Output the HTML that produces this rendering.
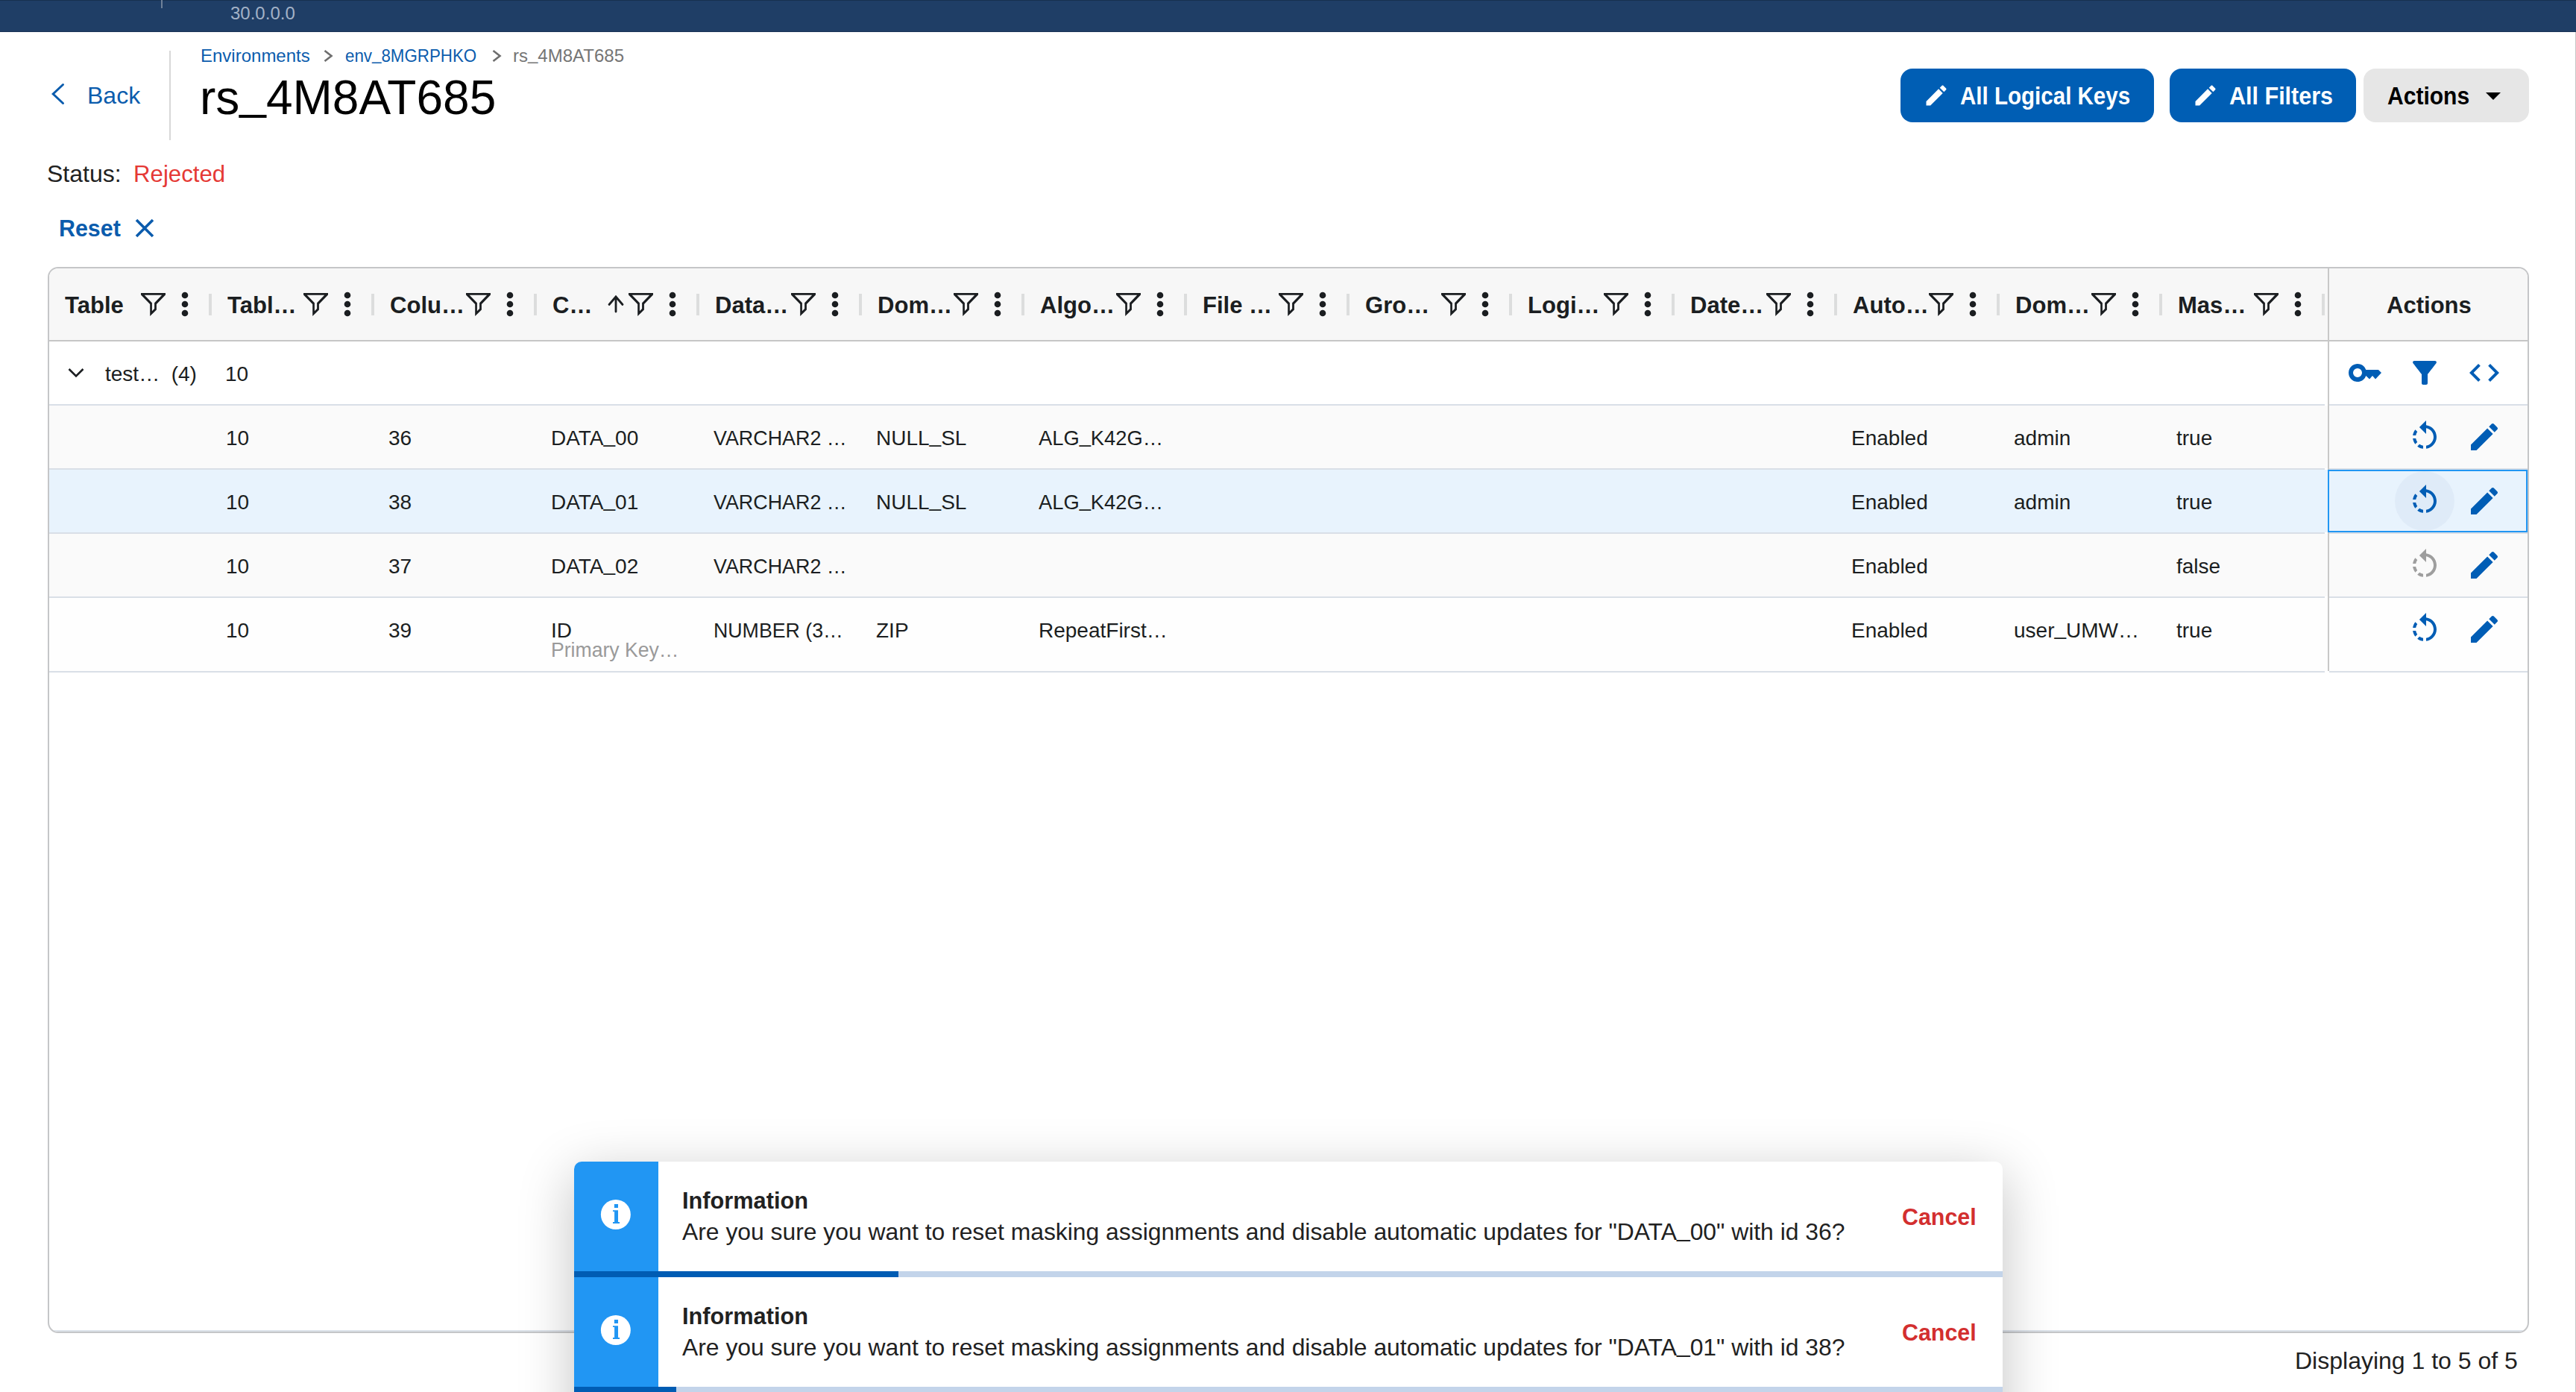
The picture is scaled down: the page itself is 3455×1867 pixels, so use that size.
<!DOCTYPE html>
<html><head><meta charset="utf-8"><style>
html,body{margin:0;padding:0;}
body{width:3455px;height:1867px;overflow:hidden;position:relative;background:#fff;font-family:"Liberation Sans", sans-serif;}
</style></head><body>
<div style="position:absolute;left:0px;top:0px;width:3455px;height:43px;background:#1f3e66;"></div>
<div style="position:absolute;left:0px;top:0px;width:3455px;height:1px;background:#17304f;"></div>
<div style="position:absolute;left:0px;top:42px;width:3455px;height:1px;background:#1a3457;"></div>
<div style="position:absolute;left:216px;top:0px;width:2px;height:11px;background:#6f8199;"></div>
<div style="position:absolute;left:309.00px;top:5.88px;font-size:24px;line-height:24px;color:#a3b2c6;font-weight:normal;white-space:nowrap;">30.0.0.0</div>
<div style="position:absolute;left:3454px;top:43px;width:1px;height:1824px;background:#c6c6c6;"></div>
<svg style="position:absolute;left:60px;top:100px" width="40" height="50" viewBox="0 0 40 50"><polyline points="24.5,13.5 11.2,26 24.5,38.5" fill="none" stroke="#0b5cad" stroke-width="3" stroke-linecap="round" stroke-linejoin="miter"/></svg>
<div style="position:absolute;left:117.00px;top:111.91px;font-size:32px;line-height:32px;color:#0b5cad;font-weight:normal;white-space:nowrap;">Back</div>
<div style="position:absolute;left:227px;top:68px;width:2px;height:120px;background:#d8d8d8;"></div>
<div style="position:absolute;left:269.00px;top:62.68px;font-size:24px;line-height:24px;color:#0b5cad;font-weight:normal;white-space:nowrap;">Environments</div>
<svg style="position:absolute;left:430px;top:62px" width="20" height="26" viewBox="0 0 20 26"><polyline points="5.5,6 14.5,13 5.5,20" fill="none" stroke="#6e6e6e" stroke-width="2.6"/></svg>
<div style="position:absolute;left:463.00px;top:62.68px;font-size:24px;line-height:24px;color:#0b5cad;font-weight:normal;white-space:nowrap;transform:scaleX(0.93);transform-origin:0 0;">env<span style="position:relative;top:-0.12em">_</span>8MGRPHKO</div>
<svg style="position:absolute;left:656px;top:62px" width="20" height="26" viewBox="0 0 20 26"><polyline points="5.5,6 14.5,13 5.5,20" fill="none" stroke="#6e6e6e" stroke-width="2.6"/></svg>
<div style="position:absolute;left:688.00px;top:62.68px;font-size:24px;line-height:24px;color:#757575;font-weight:normal;white-space:nowrap;">rs<span style="position:relative;top:-0.12em">_</span>4M8AT685</div>
<div style="position:absolute;left:268.00px;top:98.82px;font-size:64px;line-height:64px;color:#000;font-weight:normal;white-space:nowrap;">rs<span style="position:relative;top:-0.12em">_</span>4M8AT685</div>
<div style="position:absolute;left:63.00px;top:216.91px;font-size:32px;line-height:32px;color:#212121;font-weight:normal;white-space:nowrap;">Status:</div>
<div style="position:absolute;left:179.00px;top:216.91px;font-size:32px;line-height:32px;color:#e53935;font-weight:normal;white-space:nowrap;transform:scaleX(0.975);transform-origin:0 0;">Rejected</div>
<div style="position:absolute;left:79.00px;top:289.91px;font-size:32px;line-height:32px;color:#0b5cad;font-weight:bold;white-space:nowrap;transform:scaleX(0.95);transform-origin:0 0;">Reset</div>
<svg style="position:absolute;left:178px;top:290px" width="32" height="32" viewBox="0 0 32 32"><path d="M5 5L27 27M27 5L5 27" stroke="#0b5cad" stroke-width="3.6" fill="none"/></svg>
<div style="position:absolute;left:2549px;top:92px;width:340px;height:72px;background:#005eb4;border-radius:16px;"></div>
<svg style="position:absolute;left:2579px;top:110px" width="36" height="36" viewBox="0 0 24 24"><path d="M3 17.25V21h3.75L17.81 9.94l-3.75-3.75L3 17.25zM20.71 7.04c.39-.39.39-1.02 0-1.41l-2.34-2.34c-.39-.39-1.02-.39-1.41 0l-1.83 1.83 3.75 3.75 1.83-1.83z" fill="#fff"/></svg>
<div style="position:absolute;left:2628.50px;top:111.57px;font-size:33px;line-height:33px;color:#fff;font-weight:bold;white-space:nowrap;transform:scaleX(0.895);transform-origin:0 0;">All Logical Keys</div>
<div style="position:absolute;left:2910px;top:92px;width:250px;height:72px;background:#005eb4;border-radius:16px;"></div>
<svg style="position:absolute;left:2940px;top:110px" width="36" height="36" viewBox="0 0 24 24"><path d="M3 17.25V21h3.75L17.81 9.94l-3.75-3.75L3 17.25zM20.71 7.04c.39-.39.39-1.02 0-1.41l-2.34-2.34c-.39-.39-1.02-.39-1.41 0l-1.83 1.83 3.75 3.75 1.83-1.83z" fill="#fff"/></svg>
<div style="position:absolute;left:2990.00px;top:111.57px;font-size:33px;line-height:33px;color:#fff;font-weight:bold;white-space:nowrap;transform:scaleX(0.925);transform-origin:0 0;">All Filters</div>
<div style="position:absolute;left:3170px;top:92px;width:222px;height:72px;background:#e6e6e6;border-radius:16px;"></div>
<div style="position:absolute;left:3202.00px;top:111.57px;font-size:33px;line-height:33px;color:#000;font-weight:bold;white-space:nowrap;transform:scaleX(0.91);transform-origin:0 0;">Actions</div>
<svg style="position:absolute;left:3330px;top:120px" width="28" height="18" viewBox="0 0 28 18"><path d="M4 4H24L14 14Z" fill="#000"/></svg>
<div style="position:absolute;left:64px;top:358px;width:3324px;height:1426px;border:2px solid #c5c6c8;border-radius:14px;overflow:hidden;background:#fff;">
<div style="position:absolute;left:0px;top:0px;width:3324px;height:96px;background:#f7f7f7;"></div>
<div style="position:absolute;left:0px;top:96px;width:3324px;height:2px;background:#c6c6c6;"></div>
<div style="position:absolute;left:21.00px;top:33.41px;font-size:32px;line-height:32px;color:#1b1e21;font-weight:bold;white-space:nowrap;transform:scaleX(0.97);transform-origin:0 0;">Table</div>
<svg style="position:absolute;left:123px;top:33px" width="33" height="31" viewBox="0 0 33 31"><path fill-rule="evenodd" fill="#1b1e21" d="M0 0H33V2.6L20.9 14.9V22.4L12.2 31V14.9L0 2.6Z M4.7 2.8H28.2L18.1 13.2V20.9L14.9 24.3V13.2Z"/></svg>
<svg style="position:absolute;left:177px;top:30px" width="10" height="36" viewBox="0 0 10 36"><circle cx="5" cy="6" r="4.3" fill="#1b1e21"/><circle cx="5" cy="18" r="4.3" fill="#1b1e21"/><circle cx="5" cy="30" r="4.3" fill="#1b1e21"/></svg>
<div style="position:absolute;left:214px;top:34px;width:4px;height:29px;background:#dcdddd;"></div>
<div style="position:absolute;left:239.00px;top:33.41px;font-size:32px;line-height:32px;color:#1b1e21;font-weight:bold;white-space:nowrap;transform:scaleX(0.97);transform-origin:0 0;">Tabl…</div>
<svg style="position:absolute;left:341px;top:33px" width="33" height="31" viewBox="0 0 33 31"><path fill-rule="evenodd" fill="#1b1e21" d="M0 0H33V2.6L20.9 14.9V22.4L12.2 31V14.9L0 2.6Z M4.7 2.8H28.2L18.1 13.2V20.9L14.9 24.3V13.2Z"/></svg>
<svg style="position:absolute;left:395px;top:30px" width="10" height="36" viewBox="0 0 10 36"><circle cx="5" cy="6" r="4.3" fill="#1b1e21"/><circle cx="5" cy="18" r="4.3" fill="#1b1e21"/><circle cx="5" cy="30" r="4.3" fill="#1b1e21"/></svg>
<div style="position:absolute;left:432px;top:34px;width:4px;height:29px;background:#dcdddd;"></div>
<div style="position:absolute;left:457.00px;top:33.41px;font-size:32px;line-height:32px;color:#1b1e21;font-weight:bold;white-space:nowrap;transform:scaleX(0.97);transform-origin:0 0;">Colu…</div>
<svg style="position:absolute;left:559px;top:33px" width="33" height="31" viewBox="0 0 33 31"><path fill-rule="evenodd" fill="#1b1e21" d="M0 0H33V2.6L20.9 14.9V22.4L12.2 31V14.9L0 2.6Z M4.7 2.8H28.2L18.1 13.2V20.9L14.9 24.3V13.2Z"/></svg>
<svg style="position:absolute;left:613px;top:30px" width="10" height="36" viewBox="0 0 10 36"><circle cx="5" cy="6" r="4.3" fill="#1b1e21"/><circle cx="5" cy="18" r="4.3" fill="#1b1e21"/><circle cx="5" cy="30" r="4.3" fill="#1b1e21"/></svg>
<div style="position:absolute;left:650px;top:34px;width:4px;height:29px;background:#dcdddd;"></div>
<div style="position:absolute;left:675.00px;top:33.41px;font-size:32px;line-height:32px;color:#1b1e21;font-weight:bold;white-space:nowrap;transform:scaleX(0.97);transform-origin:0 0;">C…</div>
<svg style="position:absolute;left:777px;top:33px" width="33" height="31" viewBox="0 0 33 31"><path fill-rule="evenodd" fill="#1b1e21" d="M0 0H33V2.6L20.9 14.9V22.4L12.2 31V14.9L0 2.6Z M4.7 2.8H28.2L18.1 13.2V20.9L14.9 24.3V13.2Z"/></svg>
<svg style="position:absolute;left:831px;top:30px" width="10" height="36" viewBox="0 0 10 36"><circle cx="5" cy="6" r="4.3" fill="#1b1e21"/><circle cx="5" cy="18" r="4.3" fill="#1b1e21"/><circle cx="5" cy="30" r="4.3" fill="#1b1e21"/></svg>
<div style="position:absolute;left:868px;top:34px;width:4px;height:29px;background:#dcdddd;"></div>
<div style="position:absolute;left:893.00px;top:33.41px;font-size:32px;line-height:32px;color:#1b1e21;font-weight:bold;white-space:nowrap;transform:scaleX(0.97);transform-origin:0 0;">Data…</div>
<svg style="position:absolute;left:995px;top:33px" width="33" height="31" viewBox="0 0 33 31"><path fill-rule="evenodd" fill="#1b1e21" d="M0 0H33V2.6L20.9 14.9V22.4L12.2 31V14.9L0 2.6Z M4.7 2.8H28.2L18.1 13.2V20.9L14.9 24.3V13.2Z"/></svg>
<svg style="position:absolute;left:1049px;top:30px" width="10" height="36" viewBox="0 0 10 36"><circle cx="5" cy="6" r="4.3" fill="#1b1e21"/><circle cx="5" cy="18" r="4.3" fill="#1b1e21"/><circle cx="5" cy="30" r="4.3" fill="#1b1e21"/></svg>
<div style="position:absolute;left:1086px;top:34px;width:4px;height:29px;background:#dcdddd;"></div>
<div style="position:absolute;left:1111.00px;top:33.41px;font-size:32px;line-height:32px;color:#1b1e21;font-weight:bold;white-space:nowrap;transform:scaleX(0.97);transform-origin:0 0;">Dom…</div>
<svg style="position:absolute;left:1213px;top:33px" width="33" height="31" viewBox="0 0 33 31"><path fill-rule="evenodd" fill="#1b1e21" d="M0 0H33V2.6L20.9 14.9V22.4L12.2 31V14.9L0 2.6Z M4.7 2.8H28.2L18.1 13.2V20.9L14.9 24.3V13.2Z"/></svg>
<svg style="position:absolute;left:1267px;top:30px" width="10" height="36" viewBox="0 0 10 36"><circle cx="5" cy="6" r="4.3" fill="#1b1e21"/><circle cx="5" cy="18" r="4.3" fill="#1b1e21"/><circle cx="5" cy="30" r="4.3" fill="#1b1e21"/></svg>
<div style="position:absolute;left:1304px;top:34px;width:4px;height:29px;background:#dcdddd;"></div>
<div style="position:absolute;left:1329.00px;top:33.41px;font-size:32px;line-height:32px;color:#1b1e21;font-weight:bold;white-space:nowrap;transform:scaleX(0.97);transform-origin:0 0;">Algo…</div>
<svg style="position:absolute;left:1431px;top:33px" width="33" height="31" viewBox="0 0 33 31"><path fill-rule="evenodd" fill="#1b1e21" d="M0 0H33V2.6L20.9 14.9V22.4L12.2 31V14.9L0 2.6Z M4.7 2.8H28.2L18.1 13.2V20.9L14.9 24.3V13.2Z"/></svg>
<svg style="position:absolute;left:1485px;top:30px" width="10" height="36" viewBox="0 0 10 36"><circle cx="5" cy="6" r="4.3" fill="#1b1e21"/><circle cx="5" cy="18" r="4.3" fill="#1b1e21"/><circle cx="5" cy="30" r="4.3" fill="#1b1e21"/></svg>
<div style="position:absolute;left:1522px;top:34px;width:4px;height:29px;background:#dcdddd;"></div>
<div style="position:absolute;left:1547.00px;top:33.41px;font-size:32px;line-height:32px;color:#1b1e21;font-weight:bold;white-space:nowrap;transform:scaleX(0.97);transform-origin:0 0;">File …</div>
<svg style="position:absolute;left:1649px;top:33px" width="33" height="31" viewBox="0 0 33 31"><path fill-rule="evenodd" fill="#1b1e21" d="M0 0H33V2.6L20.9 14.9V22.4L12.2 31V14.9L0 2.6Z M4.7 2.8H28.2L18.1 13.2V20.9L14.9 24.3V13.2Z"/></svg>
<svg style="position:absolute;left:1703px;top:30px" width="10" height="36" viewBox="0 0 10 36"><circle cx="5" cy="6" r="4.3" fill="#1b1e21"/><circle cx="5" cy="18" r="4.3" fill="#1b1e21"/><circle cx="5" cy="30" r="4.3" fill="#1b1e21"/></svg>
<div style="position:absolute;left:1740px;top:34px;width:4px;height:29px;background:#dcdddd;"></div>
<div style="position:absolute;left:1765.00px;top:33.41px;font-size:32px;line-height:32px;color:#1b1e21;font-weight:bold;white-space:nowrap;transform:scaleX(0.97);transform-origin:0 0;">Gro…</div>
<svg style="position:absolute;left:1867px;top:33px" width="33" height="31" viewBox="0 0 33 31"><path fill-rule="evenodd" fill="#1b1e21" d="M0 0H33V2.6L20.9 14.9V22.4L12.2 31V14.9L0 2.6Z M4.7 2.8H28.2L18.1 13.2V20.9L14.9 24.3V13.2Z"/></svg>
<svg style="position:absolute;left:1921px;top:30px" width="10" height="36" viewBox="0 0 10 36"><circle cx="5" cy="6" r="4.3" fill="#1b1e21"/><circle cx="5" cy="18" r="4.3" fill="#1b1e21"/><circle cx="5" cy="30" r="4.3" fill="#1b1e21"/></svg>
<div style="position:absolute;left:1958px;top:34px;width:4px;height:29px;background:#dcdddd;"></div>
<div style="position:absolute;left:1983.00px;top:33.41px;font-size:32px;line-height:32px;color:#1b1e21;font-weight:bold;white-space:nowrap;transform:scaleX(0.97);transform-origin:0 0;">Logi…</div>
<svg style="position:absolute;left:2085px;top:33px" width="33" height="31" viewBox="0 0 33 31"><path fill-rule="evenodd" fill="#1b1e21" d="M0 0H33V2.6L20.9 14.9V22.4L12.2 31V14.9L0 2.6Z M4.7 2.8H28.2L18.1 13.2V20.9L14.9 24.3V13.2Z"/></svg>
<svg style="position:absolute;left:2139px;top:30px" width="10" height="36" viewBox="0 0 10 36"><circle cx="5" cy="6" r="4.3" fill="#1b1e21"/><circle cx="5" cy="18" r="4.3" fill="#1b1e21"/><circle cx="5" cy="30" r="4.3" fill="#1b1e21"/></svg>
<div style="position:absolute;left:2176px;top:34px;width:4px;height:29px;background:#dcdddd;"></div>
<div style="position:absolute;left:2201.00px;top:33.41px;font-size:32px;line-height:32px;color:#1b1e21;font-weight:bold;white-space:nowrap;transform:scaleX(0.97);transform-origin:0 0;">Date…</div>
<svg style="position:absolute;left:2303px;top:33px" width="33" height="31" viewBox="0 0 33 31"><path fill-rule="evenodd" fill="#1b1e21" d="M0 0H33V2.6L20.9 14.9V22.4L12.2 31V14.9L0 2.6Z M4.7 2.8H28.2L18.1 13.2V20.9L14.9 24.3V13.2Z"/></svg>
<svg style="position:absolute;left:2357px;top:30px" width="10" height="36" viewBox="0 0 10 36"><circle cx="5" cy="6" r="4.3" fill="#1b1e21"/><circle cx="5" cy="18" r="4.3" fill="#1b1e21"/><circle cx="5" cy="30" r="4.3" fill="#1b1e21"/></svg>
<div style="position:absolute;left:2394px;top:34px;width:4px;height:29px;background:#dcdddd;"></div>
<div style="position:absolute;left:2419.00px;top:33.41px;font-size:32px;line-height:32px;color:#1b1e21;font-weight:bold;white-space:nowrap;transform:scaleX(0.97);transform-origin:0 0;">Auto…</div>
<svg style="position:absolute;left:2521px;top:33px" width="33" height="31" viewBox="0 0 33 31"><path fill-rule="evenodd" fill="#1b1e21" d="M0 0H33V2.6L20.9 14.9V22.4L12.2 31V14.9L0 2.6Z M4.7 2.8H28.2L18.1 13.2V20.9L14.9 24.3V13.2Z"/></svg>
<svg style="position:absolute;left:2575px;top:30px" width="10" height="36" viewBox="0 0 10 36"><circle cx="5" cy="6" r="4.3" fill="#1b1e21"/><circle cx="5" cy="18" r="4.3" fill="#1b1e21"/><circle cx="5" cy="30" r="4.3" fill="#1b1e21"/></svg>
<div style="position:absolute;left:2612px;top:34px;width:4px;height:29px;background:#dcdddd;"></div>
<div style="position:absolute;left:2637.00px;top:33.41px;font-size:32px;line-height:32px;color:#1b1e21;font-weight:bold;white-space:nowrap;transform:scaleX(0.97);transform-origin:0 0;">Dom…</div>
<svg style="position:absolute;left:2739px;top:33px" width="33" height="31" viewBox="0 0 33 31"><path fill-rule="evenodd" fill="#1b1e21" d="M0 0H33V2.6L20.9 14.9V22.4L12.2 31V14.9L0 2.6Z M4.7 2.8H28.2L18.1 13.2V20.9L14.9 24.3V13.2Z"/></svg>
<svg style="position:absolute;left:2793px;top:30px" width="10" height="36" viewBox="0 0 10 36"><circle cx="5" cy="6" r="4.3" fill="#1b1e21"/><circle cx="5" cy="18" r="4.3" fill="#1b1e21"/><circle cx="5" cy="30" r="4.3" fill="#1b1e21"/></svg>
<div style="position:absolute;left:2830px;top:34px;width:4px;height:29px;background:#dcdddd;"></div>
<div style="position:absolute;left:2855.00px;top:33.41px;font-size:32px;line-height:32px;color:#1b1e21;font-weight:bold;white-space:nowrap;transform:scaleX(0.97);transform-origin:0 0;">Mas…</div>
<svg style="position:absolute;left:2957px;top:33px" width="33" height="31" viewBox="0 0 33 31"><path fill-rule="evenodd" fill="#1b1e21" d="M0 0H33V2.6L20.9 14.9V22.4L12.2 31V14.9L0 2.6Z M4.7 2.8H28.2L18.1 13.2V20.9L14.9 24.3V13.2Z"/></svg>
<svg style="position:absolute;left:3011px;top:30px" width="10" height="36" viewBox="0 0 10 36"><circle cx="5" cy="6" r="4.3" fill="#1b1e21"/><circle cx="5" cy="18" r="4.3" fill="#1b1e21"/><circle cx="5" cy="30" r="4.3" fill="#1b1e21"/></svg>
<div style="position:absolute;left:3048px;top:34px;width:4px;height:29px;background:#dcdddd;"></div>
<svg style="position:absolute;left:746px;top:34px" width="28" height="28" viewBox="0 0 28 28"><path d="M14 4V24 M5 14.5L14 4L23 14.5" fill="none" stroke="#1b1e21" stroke-width="2.8" stroke-linecap="round"/></svg>
<div style="position:absolute;left:3134.50px;top:32.91px;font-size:32px;line-height:32px;color:#1b1e21;font-weight:bold;white-space:nowrap;transform:scaleX(0.97);transform-origin:0 0;">Actions</div>
<div style="position:absolute;left:3056px;top:0px;width:2px;height:540px;background:#c8c8c8;"></div>
<div style="position:absolute;left:0px;top:98px;width:3056px;height:84px;background:#ffffff;"></div>
<div style="position:absolute;left:3058px;top:98px;width:3266px;height:84px;background:#ffffff;"></div>
<div style="position:absolute;left:0px;top:182px;width:3052px;height:2px;background:#d9dfe7;"></div>
<div style="position:absolute;left:3058px;top:182px;width:3266px;height:2px;background:#d9dfe7;"></div>
<div style="position:absolute;left:0px;top:184px;width:3056px;height:84px;background:#fafafa;"></div>
<div style="position:absolute;left:3058px;top:184px;width:3266px;height:84px;background:#fafafa;"></div>
<div style="position:absolute;left:0px;top:268px;width:3052px;height:2px;background:#d9dfe7;"></div>
<div style="position:absolute;left:3058px;top:268px;width:3266px;height:2px;background:#d9dfe7;"></div>
<div style="position:absolute;left:0px;top:270px;width:3056px;height:84px;background:#e8f3fd;"></div>
<div style="position:absolute;left:3058px;top:270px;width:3266px;height:84px;background:#e8f3fd;"></div>
<div style="position:absolute;left:0px;top:354px;width:3052px;height:2px;background:#d9dfe7;"></div>
<div style="position:absolute;left:3058px;top:354px;width:3266px;height:2px;background:#d9dfe7;"></div>
<div style="position:absolute;left:0px;top:356px;width:3056px;height:84px;background:#fafafa;"></div>
<div style="position:absolute;left:3058px;top:356px;width:3266px;height:84px;background:#fafafa;"></div>
<div style="position:absolute;left:0px;top:440px;width:3052px;height:2px;background:#d9dfe7;"></div>
<div style="position:absolute;left:3058px;top:440px;width:3266px;height:2px;background:#d9dfe7;"></div>
<div style="position:absolute;left:0px;top:442px;width:3056px;height:98px;background:#fefefe;"></div>
<div style="position:absolute;left:3058px;top:442px;width:3266px;height:98px;background:#fefefe;"></div>
<div style="position:absolute;left:0px;top:540px;width:3052px;height:2px;background:#d9dfe7;"></div>
<div style="position:absolute;left:3058px;top:540px;width:3266px;height:2px;background:#d9dfe7;"></div>
<svg style="position:absolute;left:22px;top:128px" width="28" height="24" viewBox="0 0 28 24"><polyline points="4.5,7 14,16.5 23.5,7" fill="none" stroke="#1b1e21" stroke-width="2.6"/></svg>
<div style="position:absolute;left:75.00px;top:127.60px;font-size:28px;line-height:28px;color:#1b1e21;font-weight:normal;white-space:nowrap;white-space:pre;">test…  (4)</div>
<div style="position:absolute;left:236.00px;top:127.60px;font-size:28px;line-height:28px;color:#1b1e21;font-weight:normal;white-space:nowrap;">10</div>
<div style="position:absolute;left:237.00px;top:213.60px;font-size:28px;line-height:28px;color:#1b1e21;font-weight:normal;white-space:nowrap;">10</div>
<div style="position:absolute;left:455.00px;top:213.60px;font-size:28px;line-height:28px;color:#1b1e21;font-weight:normal;white-space:nowrap;">36</div>
<div style="position:absolute;left:673.00px;top:213.60px;font-size:28px;line-height:28px;color:#1b1e21;font-weight:normal;white-space:nowrap;">DATA<span style="position:relative;top:-0.12em">_</span>00</div>
<div style="position:absolute;left:891.00px;top:213.60px;font-size:28px;line-height:28px;color:#1b1e21;font-weight:normal;white-space:nowrap;transform:scaleX(0.96);transform-origin:0 0;">VARCHAR2 …</div>
<div style="position:absolute;left:1109.00px;top:213.60px;font-size:28px;line-height:28px;color:#1b1e21;font-weight:normal;white-space:nowrap;">NULL<span style="position:relative;top:-0.12em">_</span>SL</div>
<div style="position:absolute;left:1327.00px;top:213.60px;font-size:28px;line-height:28px;color:#1b1e21;font-weight:normal;white-space:nowrap;transform:scaleX(0.975);transform-origin:0 0;">ALG<span style="position:relative;top:-0.12em">_</span>K42G…</div>
<div style="position:absolute;left:2417.00px;top:213.60px;font-size:28px;line-height:28px;color:#1b1e21;font-weight:normal;white-space:nowrap;">Enabled</div>
<div style="position:absolute;left:2635.00px;top:213.60px;font-size:28px;line-height:28px;color:#1b1e21;font-weight:normal;white-space:nowrap;">admin</div>
<div style="position:absolute;left:2853.00px;top:213.60px;font-size:28px;line-height:28px;color:#1b1e21;font-weight:normal;white-space:nowrap;">true</div>
<div style="position:absolute;left:237.00px;top:299.60px;font-size:28px;line-height:28px;color:#1b1e21;font-weight:normal;white-space:nowrap;">10</div>
<div style="position:absolute;left:455.00px;top:299.60px;font-size:28px;line-height:28px;color:#1b1e21;font-weight:normal;white-space:nowrap;">38</div>
<div style="position:absolute;left:673.00px;top:299.60px;font-size:28px;line-height:28px;color:#1b1e21;font-weight:normal;white-space:nowrap;">DATA<span style="position:relative;top:-0.12em">_</span>01</div>
<div style="position:absolute;left:891.00px;top:299.60px;font-size:28px;line-height:28px;color:#1b1e21;font-weight:normal;white-space:nowrap;transform:scaleX(0.96);transform-origin:0 0;">VARCHAR2 …</div>
<div style="position:absolute;left:1109.00px;top:299.60px;font-size:28px;line-height:28px;color:#1b1e21;font-weight:normal;white-space:nowrap;">NULL<span style="position:relative;top:-0.12em">_</span>SL</div>
<div style="position:absolute;left:1327.00px;top:299.60px;font-size:28px;line-height:28px;color:#1b1e21;font-weight:normal;white-space:nowrap;transform:scaleX(0.975);transform-origin:0 0;">ALG<span style="position:relative;top:-0.12em">_</span>K42G…</div>
<div style="position:absolute;left:2417.00px;top:299.60px;font-size:28px;line-height:28px;color:#1b1e21;font-weight:normal;white-space:nowrap;">Enabled</div>
<div style="position:absolute;left:2635.00px;top:299.60px;font-size:28px;line-height:28px;color:#1b1e21;font-weight:normal;white-space:nowrap;">admin</div>
<div style="position:absolute;left:2853.00px;top:299.60px;font-size:28px;line-height:28px;color:#1b1e21;font-weight:normal;white-space:nowrap;">true</div>
<div style="position:absolute;left:237.00px;top:385.60px;font-size:28px;line-height:28px;color:#1b1e21;font-weight:normal;white-space:nowrap;">10</div>
<div style="position:absolute;left:455.00px;top:385.60px;font-size:28px;line-height:28px;color:#1b1e21;font-weight:normal;white-space:nowrap;">37</div>
<div style="position:absolute;left:673.00px;top:385.60px;font-size:28px;line-height:28px;color:#1b1e21;font-weight:normal;white-space:nowrap;">DATA<span style="position:relative;top:-0.12em">_</span>02</div>
<div style="position:absolute;left:891.00px;top:385.60px;font-size:28px;line-height:28px;color:#1b1e21;font-weight:normal;white-space:nowrap;transform:scaleX(0.96);transform-origin:0 0;">VARCHAR2 …</div>
<div style="position:absolute;left:2417.00px;top:385.60px;font-size:28px;line-height:28px;color:#1b1e21;font-weight:normal;white-space:nowrap;">Enabled</div>
<div style="position:absolute;left:2853.00px;top:385.60px;font-size:28px;line-height:28px;color:#1b1e21;font-weight:normal;white-space:nowrap;">false</div>
<div style="position:absolute;left:237.00px;top:471.60px;font-size:28px;line-height:28px;color:#1b1e21;font-weight:normal;white-space:nowrap;">10</div>
<div style="position:absolute;left:455.00px;top:471.60px;font-size:28px;line-height:28px;color:#1b1e21;font-weight:normal;white-space:nowrap;">39</div>
<div style="position:absolute;left:673.00px;top:471.60px;font-size:28px;line-height:28px;color:#1b1e21;font-weight:normal;white-space:nowrap;">ID</div>
<div style="position:absolute;left:891.00px;top:471.60px;font-size:28px;line-height:28px;color:#1b1e21;font-weight:normal;white-space:nowrap;transform:scaleX(0.955);transform-origin:0 0;">NUMBER (3…</div>
<div style="position:absolute;left:1109.00px;top:471.60px;font-size:28px;line-height:28px;color:#1b1e21;font-weight:normal;white-space:nowrap;">ZIP</div>
<div style="position:absolute;left:1327.00px;top:471.60px;font-size:28px;line-height:28px;color:#1b1e21;font-weight:normal;white-space:nowrap;">RepeatFirst…</div>
<div style="position:absolute;left:2417.00px;top:471.60px;font-size:28px;line-height:28px;color:#1b1e21;font-weight:normal;white-space:nowrap;">Enabled</div>
<div style="position:absolute;left:2635.00px;top:471.60px;font-size:28px;line-height:28px;color:#1b1e21;font-weight:normal;white-space:nowrap;">user<span style="position:relative;top:-0.12em">_</span>UMW…</div>
<div style="position:absolute;left:2853.00px;top:471.60px;font-size:28px;line-height:28px;color:#1b1e21;font-weight:normal;white-space:nowrap;">true</div>
<div style="position:absolute;left:673.00px;top:498.00px;font-size:28px;line-height:28px;color:#9a9a9a;font-weight:normal;white-space:nowrap;transform:scaleX(0.95);transform-origin:0 0;">Primary Key…</div>
<svg style="position:absolute;left:3082px;top:116px" width="48" height="48" viewBox="0 0 24 24"><path fill-rule="evenodd" fill="#005db5" d="M12.66 10H21l2 2-4 4.2L17 14l-2 2.2L12.66 14A6 6 0 1 1 12.66 10Z M7 9a3 3 0 1 0 0 6a3 3 0 1 0 0-6Z"/></svg>
<svg style="position:absolute;left:3162px;top:116px" width="48" height="48" viewBox="0 0 24 24"><path fill="#005db5" d="M4.25 5.61C6.27 8.2 10 13 10 13v6c0 .55.45 1 1 1h2c.55 0 1-.45 1-1v-6s3.72-4.8 5.74-7.39c.51-.66.04-1.61-.79-1.61H5.04c-.83 0-1.3.95-.79 1.61z"/></svg>
<svg style="position:absolute;left:3242px;top:116px" width="48" height="48" viewBox="0 0 24 24"><path fill="#005db5" d="M9.4 16.6L4.8 12l4.6-4.6L8 6l-6 6 6 6 1.4-1.4zm5.2 0l4.6-4.6-4.6-4.6L16 6l6 6-6 6-1.4-1.4z"/></svg>
<div style="position:absolute;left:3146px;top:272px;width:80px;height:80px;background:#dfebf8;border-radius:50%;"></div>
<svg style="position:absolute;left:3162px;top:202px" width="48" height="48" viewBox="0 0 24 24"><path fill="#005db5" d="M7.11 8.53L5.7 7.11C4.8 8.27 4.24 9.61 4.07 11h2.02c.14-.87.49-1.72 1.02-2.47zM6.09 13H4.07c.17 1.39.72 2.73 1.62 3.89l1.41-1.42c-.52-.75-.87-1.59-1.01-2.47zm1.01 5.32c1.16.9 2.51 1.44 3.9 1.61V17.9c-.87-.15-1.71-.49-2.46-1.03L7.1 18.32zM13 4.07V1L8.45 5.55 13 10V6.09c2.84.48 5 2.94 5 5.91s-2.16 5.43-5 5.91v2.02c3.95-.49 7-3.85 7-7.93s-3.05-7.44-7-7.93z"/></svg>
<svg style="position:absolute;left:3242px;top:202px" width="48" height="48" viewBox="0 0 24 24"><path fill="#005db5" d="M3 17.25V21h3.75L17.81 9.94l-3.75-3.75L3 17.25zM20.71 7.04c.39-.39.39-1.02 0-1.41l-2.34-2.34c-.39-.39-1.02-.39-1.41 0l-1.83 1.83 3.75 3.75 1.83-1.83z"/></svg>
<svg style="position:absolute;left:3162px;top:288px" width="48" height="48" viewBox="0 0 24 24"><path fill="#005db5" d="M7.11 8.53L5.7 7.11C4.8 8.27 4.24 9.61 4.07 11h2.02c.14-.87.49-1.72 1.02-2.47zM6.09 13H4.07c.17 1.39.72 2.73 1.62 3.89l1.41-1.42c-.52-.75-.87-1.59-1.01-2.47zm1.01 5.32c1.16.9 2.51 1.44 3.9 1.61V17.9c-.87-.15-1.71-.49-2.46-1.03L7.1 18.32zM13 4.07V1L8.45 5.55 13 10V6.09c2.84.48 5 2.94 5 5.91s-2.16 5.43-5 5.91v2.02c3.95-.49 7-3.85 7-7.93s-3.05-7.44-7-7.93z"/></svg>
<svg style="position:absolute;left:3242px;top:288px" width="48" height="48" viewBox="0 0 24 24"><path fill="#005db5" d="M3 17.25V21h3.75L17.81 9.94l-3.75-3.75L3 17.25zM20.71 7.04c.39-.39.39-1.02 0-1.41l-2.34-2.34c-.39-.39-1.02-.39-1.41 0l-1.83 1.83 3.75 3.75 1.83-1.83z"/></svg>
<svg style="position:absolute;left:3162px;top:374px" width="48" height="48" viewBox="0 0 24 24"><path fill="#9e9e9e" d="M7.11 8.53L5.7 7.11C4.8 8.27 4.24 9.61 4.07 11h2.02c.14-.87.49-1.72 1.02-2.47zM6.09 13H4.07c.17 1.39.72 2.73 1.62 3.89l1.41-1.42c-.52-.75-.87-1.59-1.01-2.47zm1.01 5.32c1.16.9 2.51 1.44 3.9 1.61V17.9c-.87-.15-1.71-.49-2.46-1.03L7.1 18.32zM13 4.07V1L8.45 5.55 13 10V6.09c2.84.48 5 2.94 5 5.91s-2.16 5.43-5 5.91v2.02c3.95-.49 7-3.85 7-7.93s-3.05-7.44-7-7.93z"/></svg>
<svg style="position:absolute;left:3242px;top:374px" width="48" height="48" viewBox="0 0 24 24"><path fill="#005db5" d="M3 17.25V21h3.75L17.81 9.94l-3.75-3.75L3 17.25zM20.71 7.04c.39-.39.39-1.02 0-1.41l-2.34-2.34c-.39-.39-1.02-.39-1.41 0l-1.83 1.83 3.75 3.75 1.83-1.83z"/></svg>
<svg style="position:absolute;left:3162px;top:460px" width="48" height="48" viewBox="0 0 24 24"><path fill="#005db5" d="M7.11 8.53L5.7 7.11C4.8 8.27 4.24 9.61 4.07 11h2.02c.14-.87.49-1.72 1.02-2.47zM6.09 13H4.07c.17 1.39.72 2.73 1.62 3.89l1.41-1.42c-.52-.75-.87-1.59-1.01-2.47zm1.01 5.32c1.16.9 2.51 1.44 3.9 1.61V17.9c-.87-.15-1.71-.49-2.46-1.03L7.1 18.32zM13 4.07V1L8.45 5.55 13 10V6.09c2.84.48 5 2.94 5 5.91s-2.16 5.43-5 5.91v2.02c3.95-.49 7-3.85 7-7.93s-3.05-7.44-7-7.93z"/></svg>
<svg style="position:absolute;left:3242px;top:460px" width="48" height="48" viewBox="0 0 24 24"><path fill="#005db5" d="M3 17.25V21h3.75L17.81 9.94l-3.75-3.75L3 17.25zM20.71 7.04c.39-.39.39-1.02 0-1.41l-2.34-2.34c-.39-.39-1.02-.39-1.41 0l-1.83 1.83 3.75 3.75 1.83-1.83z"/></svg>
<div style="position:absolute;left:3056px;top:270px;width:268px;height:84px;box-sizing:border-box;border:2px solid #2196f3;"></div>
<div style="position:absolute;left:0px;top:1424px;width:3324px;height:2px;background:#dce2ea;"></div>
</div>
<div style="position:absolute;left:3078.00px;top:1809.21px;font-size:32px;line-height:32px;color:#212121;font-weight:normal;white-space:nowrap;">Displaying 1 to 5 of 5</div>
<div style="position:absolute;left:770px;top:1558px;width:1916px;height:400px;background:#fff;border-radius:10px 10px 0 0;box-shadow:0 18px 72px 2px rgba(0,0,0,0.23);"></div>
<div style="position:absolute;left:770px;top:1558px;width:113px;height:147px;background:#2196f3;border-top-left-radius:10px;"></div>
<svg style="position:absolute;left:805px;top:1608px" width="42" height="42" viewBox="0 0 42 42"><circle cx="20.85" cy="21" r="20" fill="#fff"/><path fill="#2196f3" d="M18.9 7H24V12H18.9Z M17 15.2H24V31H26V33.1H17V31H19.1V17H17Z"/></svg>
<div style="position:absolute;left:915.00px;top:1593.91px;font-size:32px;line-height:32px;color:#212121;font-weight:bold;white-space:nowrap;transform:scaleX(0.96);transform-origin:0 0;">Information</div>
<div style="position:absolute;left:914.50px;top:1635.91px;font-size:32px;line-height:32px;color:#212121;font-weight:normal;white-space:nowrap;transform:scaleX(0.995);transform-origin:0 0;">Are you sure you want to reset masking assignments and disable automatic updates for "DATA<span style="position:relative;top:-0.12em">_</span>00" with id 36?</div>
<div style="position:absolute;left:2551.00px;top:1615.91px;font-size:32px;line-height:32px;color:#d32f2f;font-weight:bold;white-space:nowrap;transform:scaleX(0.95);transform-origin:0 0;">Cancel</div>
<div style="position:absolute;left:770px;top:1705px;width:1916px;height:8px;background:#c3d4ea;"></div>
<div style="position:absolute;left:770px;top:1705px;width:434.5px;height:8px;background:#005cb3;"></div>
<div style="position:absolute;left:770px;top:1713px;width:113px;height:147px;background:#2196f3;"></div>
<svg style="position:absolute;left:805px;top:1763px" width="42" height="42" viewBox="0 0 42 42"><circle cx="20.85" cy="21" r="20" fill="#fff"/><path fill="#2196f3" d="M18.9 7H24V12H18.9Z M17 15.2H24V31H26V33.1H17V31H19.1V17H17Z"/></svg>
<div style="position:absolute;left:915.00px;top:1748.91px;font-size:32px;line-height:32px;color:#212121;font-weight:bold;white-space:nowrap;transform:scaleX(0.96);transform-origin:0 0;">Information</div>
<div style="position:absolute;left:914.50px;top:1790.91px;font-size:32px;line-height:32px;color:#212121;font-weight:normal;white-space:nowrap;transform:scaleX(0.995);transform-origin:0 0;">Are you sure you want to reset masking assignments and disable automatic updates for "DATA<span style="position:relative;top:-0.12em">_</span>01" with id 38?</div>
<div style="position:absolute;left:2551.00px;top:1770.91px;font-size:32px;line-height:32px;color:#d32f2f;font-weight:bold;white-space:nowrap;transform:scaleX(0.95);transform-origin:0 0;">Cancel</div>
<div style="position:absolute;left:770px;top:1860px;width:1916px;height:8px;background:#c3d4ea;"></div>
<div style="position:absolute;left:770px;top:1860px;width:137px;height:8px;background:#005cb3;"></div>
</body></html>
